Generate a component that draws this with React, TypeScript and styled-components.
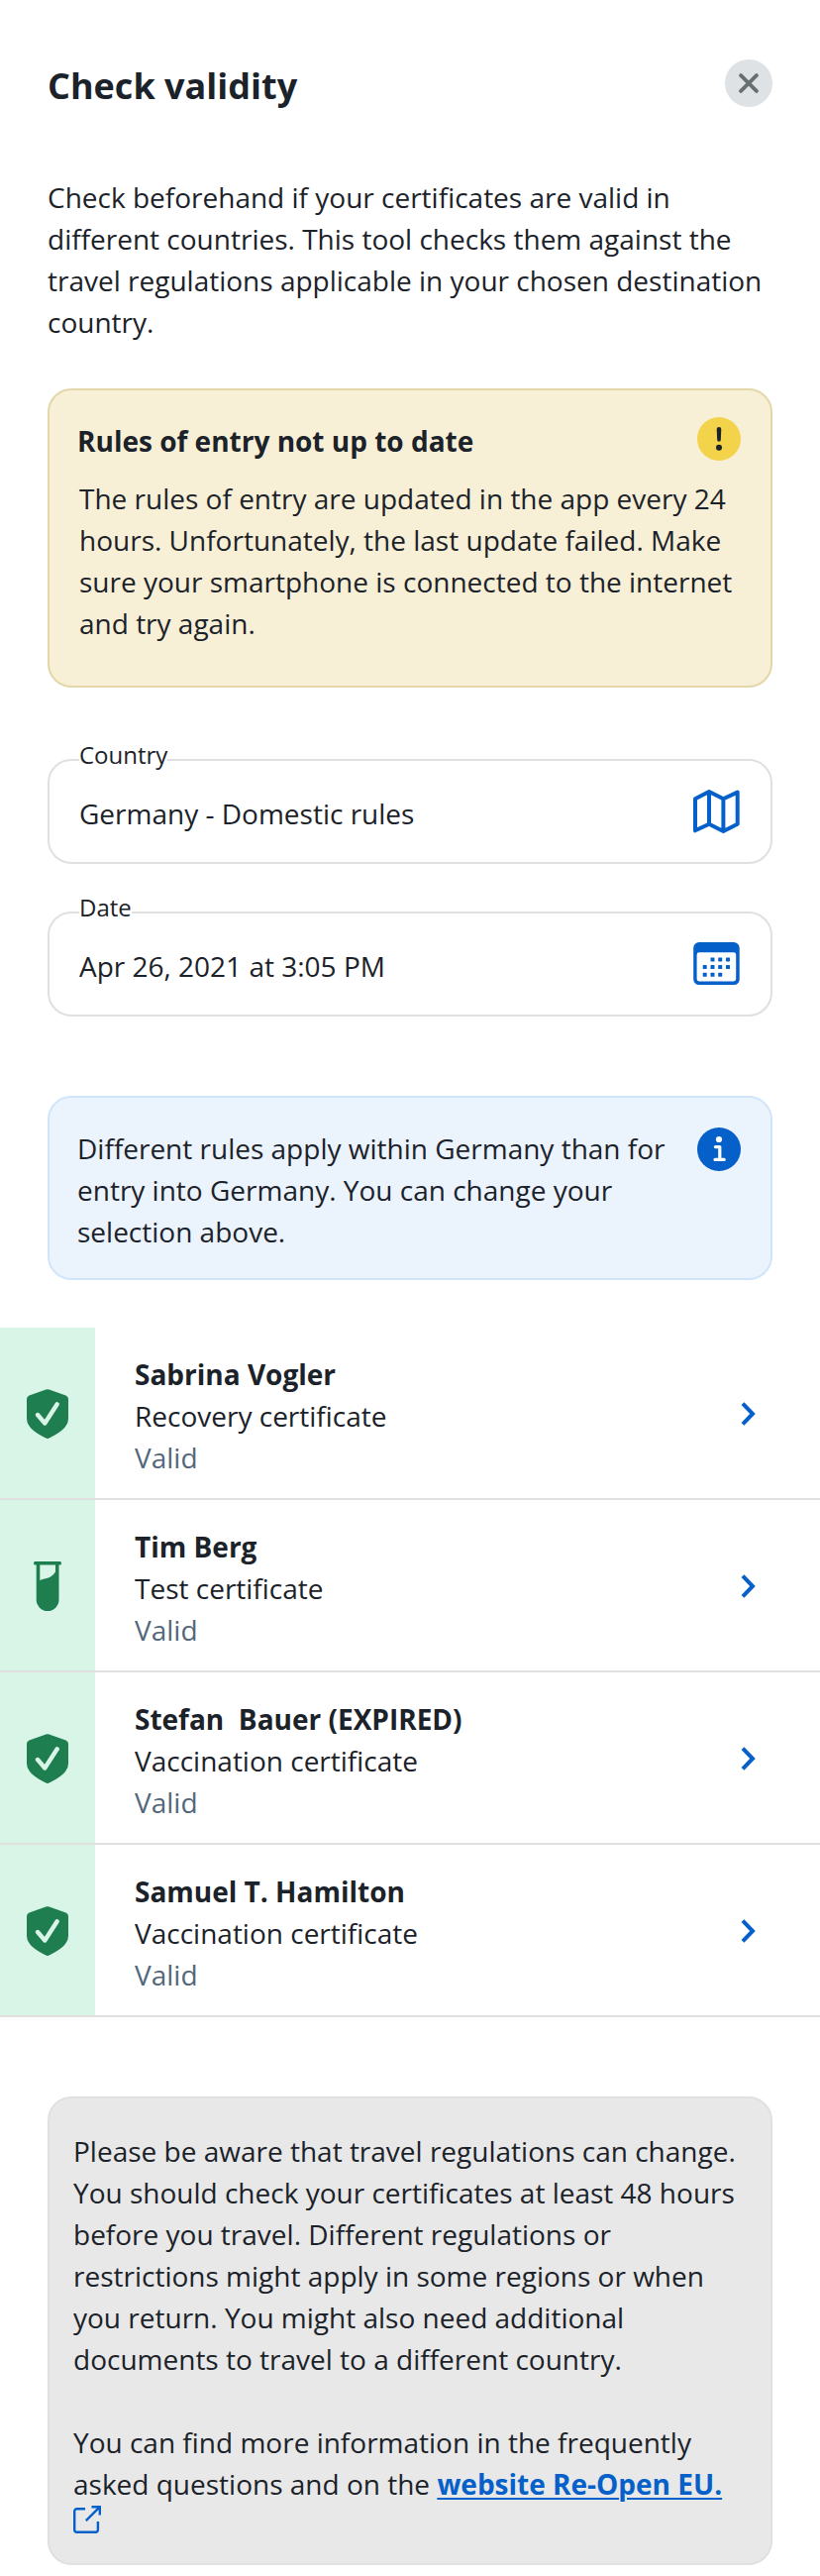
import React from "react";
import styled, { createGlobalStyle } from "styled-components";

const Global = createGlobalStyle`
  *, *::before, *::after { box-sizing: border-box; }
  body { margin: 0; background: #fff; }
  h1, h2, p, ul { margin: 0; padding: 0; list-style: none; }
  svg { display: block; }
`;

const Page = styled.main`
  display: flex;
  flex-direction: column;
  width: 828px;
  height: 2600px;
  overflow: hidden;
  font-family: "Open Sans", sans-serif;
  font-size: 28px;
  line-height: 42px;
  color: #1b2229;
`;

const Header = styled.header`
  display: flex;
  justify-content: space-between;
  align-items: flex-start;
  padding: 60px 48px 0;
`;

const Title = styled.h1`
  font-size: 36px;
  line-height: 54px;
  font-weight: 700;
`;

const CloseButton = styled.button`
  display: grid;
  place-items: center;
  width: 48px;
  height: 48px;
  padding: 0;
  border: 0;
  border-radius: 50%;
  background: #dee2e5;
`;

const Intro = styled.p`
  margin: 64px 48px 0;
`;

const Notice = styled.section<{ $tone: "warning" | "info" }>`
  display: grid;
  grid-template-columns: 1fr 44px;
  align-content: start;
  margin: ${(p) => (p.$tone === "warning" ? "46px 48px 0" : "80px 48px 0")};
  padding: ${(p) => (p.$tone === "warning" ? "27px 30px 42px 28px" : "30px 30px 28px 28px")};
  height: ${(p) => (p.$tone === "warning" ? "302px" : "186px")};
  border: 2px solid ${(p) => (p.$tone === "warning" ? "#e3d7a9" : "#d0e5fb")};
  border-radius: 24px;
  background: ${(p) => (p.$tone === "warning" ? "#f8f0d6" : "#ebf3fd")};
`;

const NoticeTitle = styled.h2`
  font-size: 28px;
  line-height: 48px;
  font-weight: 700;
`;

const NoticeBody = styled.p`
  grid-column: 1 / -1;
  margin: 13px 0 0 2px;
`;

const Fields = styled.div`
  display: flex;
  flex-direction: column;
  gap: 48px;
  margin: 72px 48px 0;
`;

const Field = styled.div`
  position: relative;
  display: flex;
  justify-content: space-between;
  align-items: center;
  height: 106px;
  padding: 0 30px;
  border: 2px solid #e0e0e0;
  border-radius: 24px;
`;

const FieldLabel = styled.label`
  position: absolute;
  left: 30px;
  top: -24px;
  background: #fff;
  font-size: 24px;
  line-height: 36px;
`;

const FieldValue = styled.span`
  padding-top: 4px;
`;

const List = styled.ul`
  margin-top: 48px;
`;

const Row = styled.li`
  display: grid;
  grid-template-columns: 96px 1fr 48px;
  height: 174px;
  padding-right: 48px;
  border-bottom: 2px solid #e0e0e0;
`;

const StatusCell = styled.div`
  display: grid;
  place-items: center;
  padding-top: 2px;
  background: #d9f5e7;
`;

const Details = styled.div`
  padding: 26px 0 0 40px;
`;

const Name = styled.p`
  font-weight: 700;
  white-space: pre;
`;

const Status = styled.p`
  color: #53677c;
`;

const RowArrow = styled.div`
  display: grid;
  place-items: center;
  padding-top: 2px;
`;

const Footnote = styled.section`
  display: flex;
  flex-direction: column;
  gap: 42px;
  height: 473px;
  margin: 80px 48px 0;
  padding: 32px 24px 0;
  border: 2px solid #e0e0e0;
  border-radius: 24px;
  background: #e8e8e8;
`;

const Link = styled.a`
  color: #0560c9;
  font-weight: 700;
  text-decoration: underline;
  text-decoration-thickness: 2px;
  text-underline-offset: 3px;
`;

const BLUE = "#0560c9";
const GREEN = "#1e7e4f";

const CloseIcon = () => (
  <svg width="20" height="20" viewBox="0 0 20 20" fill="none" stroke="#67706f" strokeWidth="3.8" strokeLinecap="round">
    <path d="M2.1 2.1 17.900 17.900M17.900 2.100 2.100 17.900" />
  </svg>
);

const WarningIcon = () => (
  <svg width="44" height="44" viewBox="0 0 44 44">
    <circle cx="22" cy="22" r="22" fill="#f3d34a" />
    <path d="M19.700 12.200A2.300 2.300 0 0 1 24.300 12.200L23.800 23A1.800 1.800 0 0 1 20.200 23Z" fill="#1b2229" />
    <circle cx="22" cy="30.700" r="3" fill="#1b2229" />
  </svg>
);

const InfoIcon = () => (
  <svg width="44" height="44" viewBox="0 0 44 44">
    <circle cx="22" cy="22" r="22" fill={BLUE} />
    <circle cx="22" cy="12" r="3.1" fill="#fff" />
    <path d="M18.4 19.6H22.8V32.4M18 32.4H27.2" fill="none" stroke="#fff" strokeWidth="3.2" strokeLinecap="round" strokeLinejoin="round" />
  </svg>
);

const MapIcon = () => (
  <svg width="48" height="44" viewBox="0 0 48 44" fill="none" stroke={BLUE} strokeWidth="4" strokeLinejoin="round">
    <path d="M2 9.3 16 2 30.4 9.3 44.7 2.6V34.7L30.4 42 16 34.7 2 41.3ZM16 2V34.7M30.4 9.3V42" />
  </svg>
);

const CalendarIcon = () => (
  <svg width="48" height="44" viewBox="0 0 48 44">
    <path fillRule="evenodd" fill={BLUE} d="M6 0H41A5.7 5.7 0 0 1 46.7 5.700V37.500A5.5 5.5 0 0 1 41 43H6A5.7 5.7 0 0 1 .2 37.500V5.700A5.7 5.7 0 0 1 6 0ZM6 10.3A2.4 2.4 0 0 0 3.6 12.700V37A2.4 2.4 0 0 0 6 39.400H40.8A2.4 2.4 0 0 0 43.2 37V12.700A2.4 2.4 0 0 0 40.8 10.3Z" />
    {[[19.5, 17.4], [27.2, 17.4], [35, 17.4], [11.7, 25.1], [19.5, 25.1], [27.2, 25.1], [35, 25.1], [11.7, 32.8], [19.5, 32.8], [27.2, 32.8]].map(([x, y]) => (
      <rect key={`${x}-${y}`} x={x - 2} y={y - 2} width="4" height="4" rx="0.6" fill={BLUE} />
    ))}
  </svg>
);

const ShieldIcon = () => (
  <svg width="42" height="50" viewBox="0 0 42 50">
    <path fill={GREEN} d="M19.4.5Q21-.2 22.6.5L39.5 6.5Q42 7.5 42 10V30Q42 34 39.3 37.5C35 43.5 27.5 47 22 49.8Q21 50.3 20 49.8C14.5 47 7 43.5 2.7 37.5Q0 34 0 30V10Q0 7.5 2.5 6.5Z" />
    <path d="M11 26 18.3 34.5 30.7 15.3" fill="none" stroke="#d9f5e7" strokeWidth="4.4" strokeLinecap="round" strokeLinejoin="round" />
  </svg>
);

const TubeIcon = () => (
  <svg width="28" height="50" viewBox="0 0 28 50">
    <rect x="0" y="0" width="28" height="3.4" rx="1.5" fill={GREEN} />
    <path fillRule="evenodd" fill={GREEN} d="M2.7 2H25.5V38.6A11.4 11.4 0 0 1 2.7 38.6ZM6.3 3V19.3C11 16.6 17 18.3 22 10.6V3Z" />
  </svg>
);

const ChevronIcon = () => (
  <svg width="16" height="24" viewBox="0 0 16 24" fill="none" stroke={BLUE} strokeWidth="4">
    <path d="M2 1.7 12 12 2 22.3" />
  </svg>
);

const ExternalSvg = styled.svg`
  margin-top: 1px;
`;

const ExternalIcon = () => (
  <ExternalSvg width="28" height="28" viewBox="0 0 28 28" fill="none" stroke={BLUE} strokeWidth="2.4">
    <path d="M12 3.2H3.6A2.3 2.3 0 0 0 1.2 5.5V24.5A2.3 2.3 0 0 0 3.6 26.8H22.5A2.3 2.3 0 0 0 24.9 24.5V16M18.5 1.2H26.8V9.5M26.6 1.4 12.8 15.2" />
  </ExternalSvg>
);

const certificates = [
  { name: "Sabrina Vogler", kind: "Recovery certificate", Icon: ShieldIcon },
  { name: "Tim Berg", kind: "Test certificate", Icon: TubeIcon },
  { name: "Stefan  Bauer (EXPIRED)", kind: "Vaccination certificate", Icon: ShieldIcon },
  { name: "Samuel T. Hamilton", kind: "Vaccination certificate", Icon: ShieldIcon },
];

export default function App() {
  return (
    <Page>
      <Global />
      <Header>
        <Title>Check validity</Title>
        <CloseButton aria-label="Close"><CloseIcon /></CloseButton>
      </Header>
      <Intro>
        Check beforehand if your certificates are valid in<br />
        different countries. This tool checks them against the<br />
        travel regulations applicable in your chosen destination<br />
        country.
      </Intro>
      <Notice $tone="warning">
        <NoticeTitle>Rules of entry not up to date</NoticeTitle>
        <WarningIcon />
        <NoticeBody>
          The rules of entry are updated in the app every 24<br />
          hours. Unfortunately, the last update failed. Make<br />
          sure your smartphone is connected to the internet<br />
          and try again.
        </NoticeBody>
      </Notice>
      <Fields>
        <Field>
          <FieldLabel>Country</FieldLabel>
          <FieldValue>Germany - Domestic rules</FieldValue>
          <MapIcon />
        </Field>
        <Field>
          <FieldLabel>Date</FieldLabel>
          <FieldValue>Apr 26, 2021 at 3:05 PM</FieldValue>
          <CalendarIcon />
        </Field>
      </Fields>
      <Notice $tone="info">
        <p>
          Different rules apply within Germany than for<br />
          entry into Germany. You can change your<br />
          selection above.
        </p>
        <InfoIcon />
      </Notice>
      <List>
        {certificates.map(({ name, kind, Icon }) => (
          <Row key={name}>
            <StatusCell><Icon /></StatusCell>
            <Details>
              <Name>{name}</Name>
              <p>{kind}</p>
              <Status>Valid</Status>
            </Details>
            <RowArrow><ChevronIcon /></RowArrow>
          </Row>
        ))}
      </List>
      <Footnote>
        <p>
          Please be aware that travel regulations can change.<br />
          You should check your certificates at least 48 hours<br />
          before you travel. Different regulations or<br />
          restrictions might apply in some regions or when<br />
          you return. You might also need additional<br />
          documents to travel to a different country.
        </p>
        <div>
          <p>
            You can find more information in the frequently<br />
            asked questions and on the <Link>website Re-Open EU.</Link>
          </p>
          <ExternalIcon />
        </div>
      </Footnote>
    </Page>
  );
}
